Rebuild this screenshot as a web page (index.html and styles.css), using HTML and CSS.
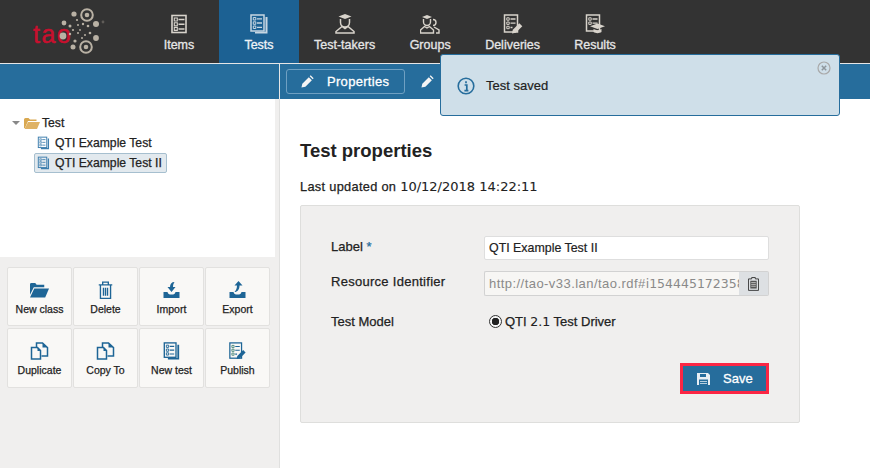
FILE: index.html
```html
<!DOCTYPE html>
<html lang="en">
<head>
<meta charset="utf-8">
<title>TAO</title>
<link rel="stylesheet" href="styles.css">
</head>
<body>
<svg class="defs" width="0" height="0">
  <symbol id="i-list" viewBox="0 0 20 20">
    <rect x="3" y="1.500" width="14" height="17" fill="none" stroke="currentColor" stroke-width="1.600"/>
    <path d="M5.300 4h3v3h-3zM5.300 8.700h3v3h-3zM5.300 13.400h3v3h-3z" fill="none" stroke="currentColor" stroke-width="1.100"/>
    <path d="M9.500 5.500h6M9.500 10.200h6M9.500 14.900h6" stroke="currentColor" stroke-width="1.500"/>
  </symbol>
  <symbol id="i-test" viewBox="0 0 20 20">
    <path d="M16 3h2.500v16.500H6v-1.800h10.500V3z" fill="currentColor"/>
    <rect x="2" y="1" width="13" height="16" fill="none" stroke="currentColor" stroke-width="1.500"/>
    <path d="M4.300 3.500h2.500v2.500H4.300zM4.300 7.800h2.500v2.500H4.300zM4.300 12h2.500v2.500H4.300z" fill="none" stroke="currentColor" stroke-width="1"/>
    <path d="M8 4.800h5M8 9h5M8 13.300h5" stroke="currentColor" stroke-width="1.300"/>
  </symbol>
  <symbol id="i-pencil" viewBox="0 0 14 14">
    <path d="M.5 13.500l.9-4.200 7-7 3.300 3.300-7 7zM9.400 1.400l1-1 3.200 3.200-1 1z" fill="currentColor"/>
  </symbol>
  <symbol id="i-copy" viewBox="0 0 18 18">
    <path d="M1 5.500h6l3 3V17H1z" fill="none" stroke="currentColor" stroke-width="1.500"/>
    <path d="M6 5V1h6l5 4.500V14h-6" fill="none" stroke="currentColor" stroke-width="1.500"/>
    <path d="M7 5.500V9h3zM12 1v4.500h5z" fill="currentColor"/>
  </symbol>
  <symbol id="i-tray" viewBox="0 0 18 18">
    <path d="M1 11h4c.5 2 1.500 2.500 4 2.500s3.500-.5 4-2.500h4v6H1z" fill="currentColor"/>
  </symbol>
</svg>

<header class="topbar">
  <div class="brand">
    <svg class="logo" width="139" height="63" viewBox="0 0 139 63">
      <text class="logo-text" x="33" y="43">tao</text>
      <g fill="#b9b1a4">
        <circle cx="74" cy="14" r="2.600"/><circle cx="64" cy="23" r="2.400"/><circle cx="96" cy="24" r="3"/>
        <circle cx="63" cy="36" r="3.400"/><circle cx="96" cy="38" r="2.900"/><circle cx="75" cy="41" r="1.600"/>
        <circle cx="73" cy="47" r="2.500"/><circle cx="70" cy="26" r="1.500"/><circle cx="77" cy="20" r="1.100"/>
        <circle cx="83" cy="24" r="1.200"/><circle cx="88" cy="26" r="1.300"/><circle cx="90" cy="33" r="1.300"/>
        <circle cx="85" cy="35" r="1"/><circle cx="82" cy="38" r="1"/><circle cx="78" cy="33" r="1"/>
        <circle cx="80" cy="30" r=".9"/><circle cx="73" cy="30" r="1.100"/><circle cx="70" cy="34" r="1.200"/>
        <circle cx="78" cy="25" r="1"/><circle cx="87" cy="15" r="2.300"/><circle cx="86" cy="47" r="2.300"/>
      </g>
      <g fill="none" stroke="#b9b1a4" stroke-width="2">
        <circle cx="87" cy="15" r="5.800"/><circle cx="86" cy="47" r="5.800"/>
      </g>
      <circle cx="103" cy="22" r="1.400" fill="#5f5c58"/>
    </svg>
  </div>
  <nav class="mainnav">
    <a class="navitem"><svg class="navicon"><use href="#i-list"/></svg><span>Items</span></a>
    <a class="navitem active"><svg class="navicon"><use href="#i-test"/></svg><span>Tests</span></a>
    <a class="navitem">
      <svg class="navicon" viewBox="0 0 20 20"><path d="M10 0l6.500 2.500L10 5 3.500 2.500z" fill="currentColor"/><path d="M5.500 5v3.500a4.500 4.500 0 0 0 9 0V5M7 12.500l-6 5v1.500h18v-1.500l-6-5-3 2z" fill="none" stroke="currentColor" stroke-width="1.500"/></svg>
      <span>Test-takers</span></a>
    <a class="navitem">
      <svg class="navicon" viewBox="0 0 20 20"><path d="M7 1l5 2-5 2-5-2z" fill="currentColor"/><path d="M3.500 5v3a3.500 3.500 0 0 0 7 0V5M4.500 12.500L.5 16v3h13v-3l-4-3.500-2.500 1.500zM13 5.500a3 3 0 0 1 3 3 3 3 0 0 1-3 3M14 13l5 3v3h-3" fill="none" stroke="currentColor" stroke-width="1.400"/></svg>
      <span>Groups</span></a>
    <a class="navitem">
      <svg class="navicon" viewBox="0 0 20 20"><rect x="1.500" y="1" width="13" height="17" fill="none" stroke="currentColor" stroke-width="1.500"/><path d="M3.800 3.800h2.400v2.400H3.800zM3.800 8h2.400v2.400H3.800zM3.800 12.300h2.400v2.400H3.800z" fill="none" stroke="currentColor" stroke-width="1"/><path d="M7.500 5h5M7.500 9.200h5M7.500 13.500h2" stroke="currentColor" stroke-width="1.300"/><path d="M9 19.500l.8-3.800 6.500-6.500 3 3-6.500 6.500z" fill="currentColor"/></svg>
      <span>Deliveries</span></a>
    <a class="navitem">
      <svg class="navicon" viewBox="0 0 20 20"><rect x="1.500" y="1" width="13" height="16" fill="none" stroke="currentColor" stroke-width="1.500"/><path d="M3.800 3.800h2.400v2.400H3.800zM3.800 8h2.400v2.400H3.800z" fill="none" stroke="currentColor" stroke-width="1"/><path d="M7.500 5h5M7.500 9.200h5" stroke="currentColor" stroke-width="1.300"/><path d="M12.500 9.500l7.500 2.700-7.500 2.800L5 12.200z" fill="currentColor"/><path d="M8.500 15v3c2 1.500 6 1.500 8 0v-3l-4 1.500z" fill="currentColor"/></svg>
      <span>Results</span></a>
  </nav>
</header>

<div class="subbar">
  <div class="subbar-left"></div>
  <div class="tabs">
    <a class="tab"><svg class="tab-icon"><use href="#i-pencil"/></svg><span>Properties</span></a>
    <svg class="tab-icon second"><use href="#i-pencil"/></svg>
  </div>
</div>

<div class="feedback">
  <svg class="info" width="18" height="18" viewBox="0 0 18 18"><circle cx="9" cy="9" r="7.800" fill="none" stroke="currentColor" stroke-width="1.600"/><path d="M9 4.200v2.100M7.600 8h2.200v5.500M7.400 13.600h4" fill="none" stroke="currentColor" stroke-width="1.700"/></svg>
  <span>Test saved</span>
  <svg class="close" width="14" height="14" viewBox="0 0 14 14"><circle cx="7" cy="7" r="6" fill="none" stroke="#a9a9a9" stroke-width="1.200"/><path d="M4.800 4.800l4.400 4.400M9.200 4.800l-4.400 4.400" stroke="#8e969c" stroke-width="1.500"/></svg>
</div>

<main class="content">
  <aside class="sidebar">
    <div class="tree">
      <div class="tree-class">
        <i class="caret"></i>
        <svg class="folder" width="16" height="12" viewBox="0 0 16 12"><path d="M0 2.500Q0 1 1.500 1h3l1.500 1.500h6.500V4H4L1 11H0z" fill="#d9a850"/><path d="M4 5h12l-3 7H.5z" fill="#dfb264"/></svg>
        <span>Test</span>
      </div>
      <div class="tree-item"><svg class="tree-icon"><use href="#i-test"/></svg><span>QTI Example Test</span></div>
      <div class="tree-item selected"><svg class="tree-icon"><use href="#i-test"/></svg><span>QTI Example Test II</span></div>
    </div>
    <div class="actions">
      <a class="action">
        <svg class="action-icon" viewBox="0 0 20 16"><path d="M0 2q0-1.500 1.500-1.500h4l1.500 2h8V5H4L0 13z" fill="currentColor"/><path d="M4.500 6.500H20L16 16H0z" fill="currentColor"/></svg>
        <span>New class</span></a>
      <a class="action">
        <svg class="action-icon" viewBox="0 0 16 16"><path d="M2 3.500h12M5.500 3V1h5v2M3.500 4v11.500h9V4M6.200 6v7M8 6v7M9.800 6v7" fill="none" stroke="currentColor" stroke-width="1.200"/></svg>
        <span>Delete</span></a>
      <a class="action">
        <svg class="action-icon" viewBox="0 0 18 18"><use href="#i-tray"/><path d="M12 1c-3 0-4.500 2-4.500 5H5l4 5 4-5h-2.500c0-2 .5-3.500 1.500-5z" fill="currentColor"/></svg>
        <span>Import</span></a>
      <a class="action">
        <svg class="action-icon" viewBox="0 0 18 18"><use href="#i-tray"/><path d="M10 0L6 4.500h2.500c0 3-1 5-2.500 6.500 3 0 5-2.500 5-6.500H14z" fill="currentColor"/></svg>
        <span>Export</span></a>
      <a class="action"><svg class="action-icon"><use href="#i-copy"/></svg><span>Duplicate</span></a>
      <a class="action"><svg class="action-icon"><use href="#i-copy"/></svg><span>Copy To</span></a>
      <a class="action"><svg class="action-icon"><use href="#i-test"/></svg><span>New test</span></a>
      <a class="action">
        <svg class="action-icon" viewBox="0 0 20 20"><rect x="1.500" y="1" width="13" height="17" fill="none" stroke="currentColor" stroke-width="1.400"/><path d="M3.800 3.800h2.400v2.400H3.800zM3.800 8h2.400v2.400H3.800zM3.800 12.300h2.400v2.400H3.800z" fill="none" stroke="#3a7d6e" stroke-width=".9"/><path d="M7.500 5h5M7.500 9.200h5M7.500 13.500h2" stroke="currentColor" stroke-width="1.200"/><path d="M9 19l.8-3.500 6.500-6.500 2.700 2.700-6.500 6.500z" fill="currentColor"/></svg>
        <span>Publish</span></a>
    </div>
  </aside>
  <section class="main">
    <h1>Test properties</h1>
    <p class="updated">Last updated on <span class="digits">10/12/2018 14:22:11</span></p>
    <form class="panel">
      <div class="row row-label">
        <label>Label <em>*</em></label>
        <input class="field" type="text" value="QTI Example Test II">
      </div>
      <div class="row row-id">
        <label>Resource Identifier</label>
        <div class="idgroup">
          <div class="field idfield">http://tao-v33.lan/tao.rdf#<span class="digits">i1544451723581</span></div>
          <span class="clip"><svg width="11" height="15" viewBox="0 0 12 16"><path d="M4 1.500h4V3h3.500v12.500H.5V3H4z" fill="none" stroke="#333" stroke-width="1"/><path d="M2.500 5h7v8.500h-7z" fill="#555"/><path d="M3.500 7h5M3.500 9h5M3.500 11h5" stroke="#ddd" stroke-width=".8"/></svg></span>
        </div>
      </div>
      <div class="row row-model">
        <label>Test Model</label>
        <span class="radio"><i class="radio-mark"></i><span>QTI <span class="digits">2.1</span> Test Driver</span></span>
      </div>
      <div class="form-actions">
        <button class="save" type="button">
          <svg width="13" height="12" viewBox="0 0 13 12"><path d="M0 0h11l2 2v10H0z" fill="#e8eef3"/><path d="M3 1h6v3H3z" fill="#266d9c"/><path d="M2 6.500h9V12H2z" fill="#266d9c"/><path d="M3 8h7v.8H3zM3 10h7v.8H3z" fill="#e8eef3"/></svg>
          <span>Save</span>
        </button>
      </div>
    </form>
  </section>
</main>
</body>
</html>
```
FILE: styles.css
```css
* { box-sizing: border-box; }
html, body { margin: 0; height: 100%; }
body {
  position: relative;
  width: 870px;
  height: 468px;
  overflow: hidden;
  background: #fff;
  color: #222;
  font-family: "Liberation Sans", Arial, sans-serif;
  font-size: 12px;
  display: flex;
  flex-direction: column;
}
.defs { position: absolute; }
.digits { font-family: "DejaVu Sans", sans-serif; }

.topbar {
  display: flex;
  height: 64px;
  background: #333;
  border-bottom: 1px solid #e6e6e6;
  flex: none;
}
.brand { width: 139px; }
.logo { display: block; }
.logo-text {
  font-family: "Liberation Sans", Arial, sans-serif;
  font-size: 25px;
  fill: #c8102e;
  stroke: #c8102e;
  stroke-width: .5px;
  letter-spacing: 1.500px;
}
.mainnav { display: flex; }
.navitem {
  min-width: 80px;
  padding: 14px 15px 0;
  color: #e6e6e6;
  font-size: 12.500px;
  display: flex;
  flex-direction: column;
  align-items: center;
  gap: 4px;
  -webkit-text-stroke: .3px currentColor;
}
.navitem.active { background: #1c6193; color: #eef3f7; }
.navicon { width: 20px; height: 20px; color: #d8d3cb; }
.navitem.active .navicon { color: #c6d6e2; }

.subbar {
  height: 35px;
  background: #266d9c;
  display: flex;
  flex: none;
  color: #fff;
}
.subbar-left { width: 280px; border-right: 1px solid #e6e6e6; }
.tabs { display: flex; align-items: center; padding: 5px 0 5px 6px; }
.tab {
  width: 119px;
  height: 25px;
  border: 1px solid #6fa0c2;
  border-radius: 3px;
  display: flex;
  align-items: center;
  padding-left: 14px;
  gap: 13px;
  font-size: 13px;
  letter-spacing: .3px;
  -webkit-text-stroke: .3px currentColor;
}
.tab-icon { width: 13px; height: 13px; color: #f4f4f4; }
.tab-icon.second { margin-left: 16px; }

.feedback {
  position: absolute;
  left: 440px;
  top: 54px;
  width: 400px;
  height: 62px;
  background: #cfdfe9;
  border: 1px solid #266d9c;
  border-radius: 3px;
  display: flex;
  align-items: center;
  gap: 11px;
  padding: 1px 0 0 16px;
  font-size: 13px;
  color: #222;
  -webkit-text-stroke: .2px currentColor;
  z-index: 5;
}
.info { color: #266d9c; }
.close { position: absolute; right: 8px; top: 6px; }

.content { flex: 1; display: flex; min-height: 0; }
.sidebar {
  width: 280px;
  flex: none;
  background: #f0efee;
  border-right: 1px solid #e0e0df;
  display: flex;
  flex-direction: column;
}
.tree {
  width: 275px;
  height: 158px;
  background: #fff;
  padding-top: 15px;
  font-size: 12.200px;
  -webkit-text-stroke: .25px currentColor;
}
.tree-class { display: flex; align-items: center; height: 18px; margin-bottom: 1px; padding-left: 12px; }
.caret {
  width: 0; height: 0;
  border-left: 4px solid transparent;
  border-right: 4px solid transparent;
  border-top: 4px solid #888;
  margin-right: 4px;
}
.folder { margin-right: 2px; }
.tree-item {
  display: flex;
  align-items: center;
  gap: 5px;
  width: max-content;
  height: 20px;
  margin-left: 34px;
  padding: 0 4px 0 2px;
  border: 1px solid transparent;
}
.tree-item.selected { background: #e2e9ee; border-color: #a6bfcf; border-radius: 2px; }
.tree-icon { width: 13px; height: 14px; color: #3f7fae; }

.actions {
  display: grid;
  grid-template-columns: repeat(4, 65px);
  grid-template-rows: 59px 60px;
  column-gap: 1px;
  row-gap: 2px;
  padding: 10px 0 0 7px;
}
.action {
  background: #f9f8f6;
  border: 1px solid #e2e1df;
  border-radius: 2px;
  display: flex;
  flex-direction: column;
  align-items: center;
  padding-top: 13px;
  gap: 4px;
  font-size: 10.500px;
  color: #222;
  -webkit-text-stroke: .25px currentColor;
}
.action-icon { width: 19px; height: 18px; color: #1e6596; }

.main { flex: 1; padding: 42px 0 0 20px; min-width: 0; }
h1 { margin: 0; font-size: 18.500px; line-height: 20px; font-weight: 700; color: #222; }
.updated { margin: 18px 0 0; font-size: 12.800px; line-height: 15px; letter-spacing: .3px; color: #222; -webkit-text-stroke: .25px currentColor; }
.updated .digits { font-size: 13px; letter-spacing: 0; -webkit-text-stroke: .1px currentColor; }
.panel {
  margin-top: 11px;
  width: 500px;
  height: 218px;
  background: #f0efee;
  border: 1px solid #dededc;
  border-radius: 2px;
  padding: 30px 30px 0;
}
.row { display: flex; align-items: center; }
.row label { width: 153px; padding-bottom: 4px; font-size: 13px; color: #222; -webkit-text-stroke: .25px currentColor; }
.row-label { height: 24px; }
.row-id { height: 25px; margin-top: 11px; }
.row-id label { letter-spacing: .28px; }
.row-model { height: 24px; margin-top: 13px; }
.row-model label { padding-bottom: 0; }
.row label em { font-style: normal; color: #266d9c; }
.field {
  width: 285px;
  height: 24px;
  border: 1px solid #dedede;
  border-radius: 2px;
  background: #fff;
  font: 12.400px "Liberation Sans", Arial, sans-serif;
  color: #222;
  padding: 0 4px;
  -webkit-text-stroke: .2px currentColor;
  outline: none;
}
.idgroup { display: flex; width: 285px; height: 25px; }
.idfield {
  flex: 1;
  width: auto;
  height: 25px;
  min-width: 0;
  overflow: hidden;
  white-space: nowrap;
  line-height: 23px;
  font-size: 13px;
  letter-spacing: .45px;
  background: #f7f6f4;
  color: #8a8a8a;
  border-color: #d2d2d2;
  border-right: 0;
  border-radius: 2px 0 0 2px;
  -webkit-text-stroke: 0;
}
.idfield .digits { font-size: 12.500px; letter-spacing: 0; }
.clip {
  flex: none;
  width: 30px;
  height: 25px;
  background: #dde0e3;
  border: 1px solid #d2d2d2;
  border-left: 0;
  border-radius: 0 2px 2px 0;
  display: flex;
  align-items: center;
  justify-content: center;
}
.radio { display: flex; align-items: center; gap: 3px; font-size: 13px; margin-left: 5px; -webkit-text-stroke: .25px currentColor; }
.radio .digits { font-size: 12.500px; -webkit-text-stroke: .1px currentColor; }
.radio-mark {
  width: 13px;
  height: 13px;
  border-radius: 50%;
  border: 1px solid #333;
  background: radial-gradient(circle, #222 0 3.500px, #f6f6f6 4px);
}
.form-actions { display: flex; justify-content: flex-end; margin-top: 30px; }
.save {
  width: 89px;
  height: 31px;
  background: #266d9c;
  color: #fff;
  border: 3px solid #fb2644;
  display: flex;
  align-items: center;
  padding: 0 0 0 14px;
  gap: 13px;
  font: 13px "Liberation Sans", Arial, sans-serif;
  -webkit-text-stroke: .3px currentColor;
}
```
